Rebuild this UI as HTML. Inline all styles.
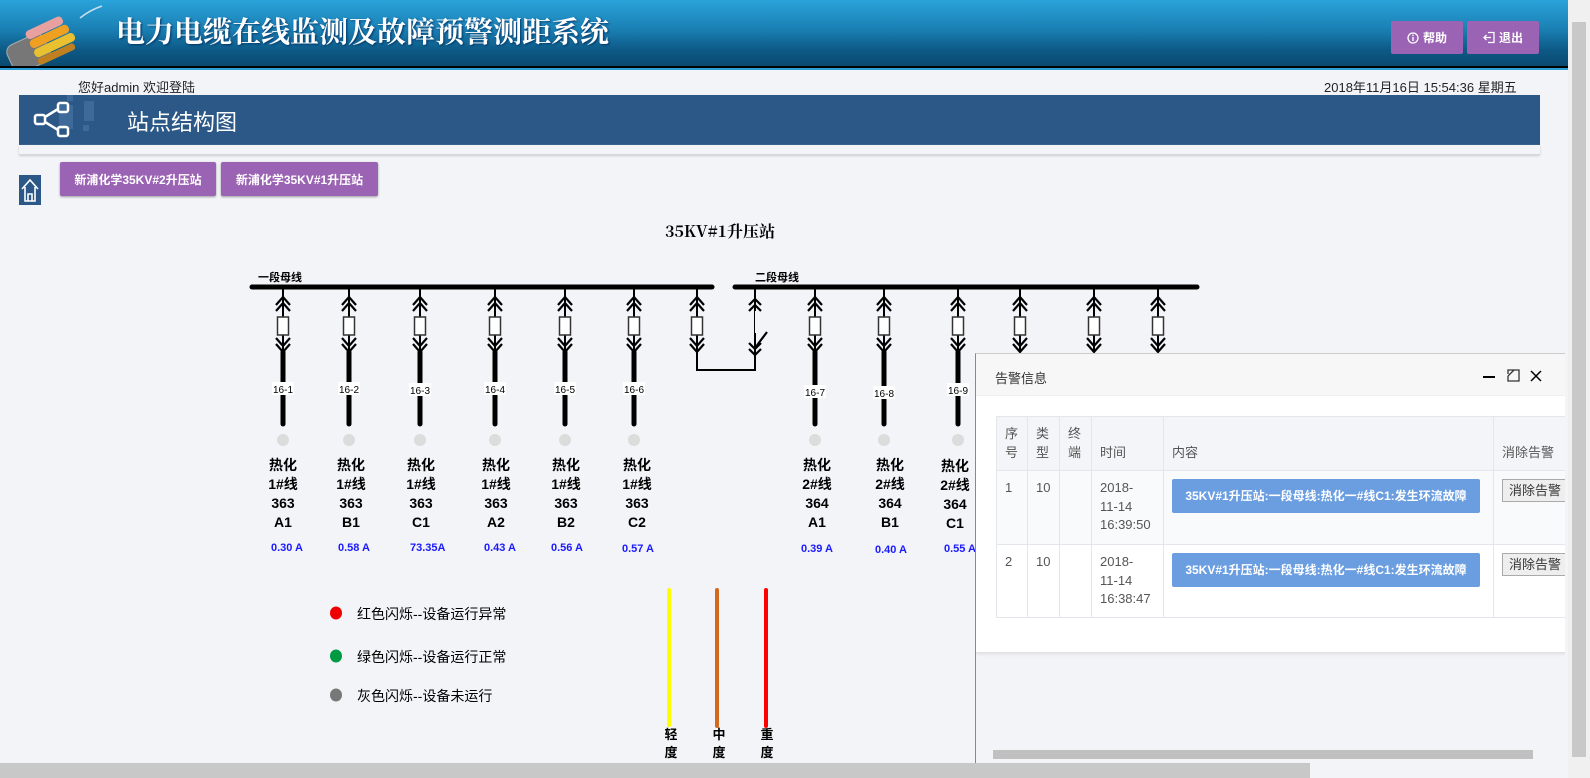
<!DOCTYPE html>
<html><head><meta charset="utf-8">
<style>
*{margin:0;padding:0;box-sizing:border-box}
body{width:1590px;height:778px;overflow:hidden;background:#f3f4f8;font-family:"Liberation Sans","Noto Sans CJK SC",sans-serif;position:relative}
.hdr{position:absolute;left:0;top:0;width:1568px;height:66px;background:linear-gradient(#29a3d9 0%,#1a7fb3 45%,#0d5a87 75%,#0a4a70 100%)}
.hdr:after{content:"";position:absolute;left:0;top:66px;width:100%;height:2px;background:#000}
.hline{position:absolute;left:0;top:68px;width:1568px;height:2px;background:#2a9fd6}
.title{position:absolute;left:116px;top:10px;font-family:"Noto Serif CJK SC",serif;font-weight:bold;font-size:29px;color:#fff;letter-spacing:0px;text-shadow:1px 1px 2px #036}
.hbtn{position:absolute;top:21px;height:33px;background:#9b63b3;color:#fff;font-size:12px;font-weight:bold;border-radius:2px;display:flex;align-items:center;justify-content:center;gap:4px}
.sub{position:absolute;top:77px;font-size:13px;color:#222}
.bar{position:absolute;left:19px;top:95px;width:1521px;height:50px;background:#2b5887}
.barb{position:absolute;left:19px;top:145px;width:1521px;height:10px;background:#f3f4f8;border-bottom:1px solid #d8d8dc;box-shadow:0 1px 2px #ccc}
.bar span{position:absolute;left:108px;top:10px;color:#fff;font-size:22px}
.pbtn{position:absolute;top:162px;height:34px;background:#9b63b3;color:#fff;font-size:12px;font-weight:bold;display:flex;align-items:center;justify-content:center;border-radius:2px;box-shadow:0 1px 2px #999}
.vsb{position:absolute;left:1568px;top:0;width:22px;height:778px;background:#f0f0f0}
.vsb i{position:absolute;left:4px;top:22px;width:14px;height:735px;background:#c8c8c8}
.dlg{position:absolute;left:975px;top:353px;width:590px;height:410px;background:#f3f4f8;border-left:1px solid #888;border-top:1px solid #ccc;overflow:hidden}
.dh{height:42px;background:#f7f7f7;border-bottom:1px solid #eee;font-size:13px;color:#333;padding:14px 0 0 19px;position:relative}
.db{background:#fff;height:256px;padding-top:20px;padding-left:20px;box-shadow:0 2px 3px #ddd;overflow:hidden;width:590px}
table{border-collapse:collapse;font-size:13px;color:#555;table-layout:fixed;width:620px}
td,th{border:1px solid #e3e6ea;font-weight:normal;text-align:left;vertical-align:top;padding:8px 8px;line-height:18.5px;overflow:hidden}
th{background:#f3f5f8;vertical-align:bottom}
tr.r td{background:#f9fafc}
.ab{background:#6a9ee0;color:#fff;font-weight:bold;font-size:12px;height:34px;width:308px;display:flex;align-items:center;justify-content:center;border-radius:2px;margin-top:0;white-space:nowrap}
.xb{border:1px solid #aaa;background:#eee;font-size:13px;color:#333;padding:3px 6px;width:70px;white-space:nowrap;overflow:hidden;height:23px;line-height:16px}
</style></head><body>
<div class="hdr">
<svg width="110" height="66" style="position:absolute;left:0;top:0">
<g transform="rotate(-25 50 40)">
<rect x="5" y="28" width="40" height="30" rx="8" fill="#777" stroke="#aaa"/>
<rect x="30" y="22" width="40" height="9" rx="4" fill="#e8a0a0"/>
<rect x="30" y="32" width="42" height="9" rx="4" fill="#f0a020"/>
<rect x="30" y="42" width="44" height="9" rx="4" fill="#e8c030"/>
<rect x="30" y="52" width="40" height="7" rx="3" fill="#c08020"/>
</g>
<path d="M80 18 q10 -8 22 -12" stroke="#cde" stroke-width="1.5" fill="none"/>
</svg>
<div class="title">电力电缆在线监测及故障预警测距系统</div>
<div class="hbtn" style="left:1391px;width:72px"><svg width="12" height="12"><circle cx="6" cy="6" r="5" fill="none" stroke="#fff" stroke-width="1.3"/><rect x="5.3" y="5" width="1.4" height="4" fill="#fff"/><rect x="5.3" y="2.7" width="1.4" height="1.4" fill="#fff"/></svg>帮助</div>
<div class="hbtn" style="left:1467px;width:72px"><svg width="12" height="13"><path d="M5 1.5h6v10H5M1 6.5h7M3.5 4 1 6.5 3.5 9" fill="none" stroke="#fff" stroke-width="1.3"/></svg>退出</div>
</div>
<div class="hline"></div>
<div class="sub" style="left:78px">您好admin 欢迎登陆</div>
<div class="sub" style="left:1324px">2018年11月16日 15:54:36 星期五</div>
<div class="bar">
<svg width="90" height="50" style="position:absolute;left:0;top:0">
<rect x="40" y="10" width="14" height="24" fill="#3d6a98"/><rect x="65" y="6" width="10" height="20" fill="#3d6a98"/><rect x="64" y="30" width="6" height="6" fill="#3d6a98"/><rect x="48" y="0" width="6" height="6" fill="#3d6a98"/>
<g fill="none" stroke="#fff" stroke-width="2.5"><rect x="39" y="8" width="10" height="9" rx="2"/><rect x="39" y="32" width="10" height="9" rx="2"/><rect x="16" y="20" width="10" height="9" rx="2"/><path d="M26 22 39 14M26 27 39 35"/></g>
</svg>
<span>站点结构图</span></div>
<div class="barb"></div>
<svg width="22" height="30" style="position:absolute;left:19px;top:175px"><rect width="22" height="30" fill="#2b5887"/><path d="M3 14 11 5 19 14M6 12v14h10V12M9 26v-7h4v7" fill="none" stroke="#fff" stroke-width="1.6"/></svg>
<div class="pbtn" style="left:60px;width:156px">新浦化学35KV#2升压站</div>
<div class="pbtn" style="left:221px;width:157px">新浦化学35KV#1升压站</div>

<svg width="1568" height="778" style="position:absolute;left:0;top:0" font-family="Liberation Sans,Noto Sans CJK SC,sans-serif">
<defs>
<g id="fd">
<line x1="0" y1="287" x2="0" y2="352" stroke="#000" stroke-width="2"/>
<g fill="none" stroke="#000" stroke-width="2.2">
<polyline points="-7,305 0,297 7,305"/><polyline points="-7,311 0,303 7,311"/>
<polyline points="-7,338 0,346 7,338"/><polyline points="-7,344 0,352 7,344"/></g>
<rect x="-5.5" y="317" width="11" height="18" fill="#fff" stroke="#333" stroke-width="1.5"/>
</g>
<g id="ln"><line x1="0" y1="352" x2="0" y2="424" stroke="#000" stroke-width="5" stroke-linecap="round"/><circle cx="0" cy="440" r="6" fill="#dcdcdc"/></g>
</defs>
<text x="720" y="237" font-size="16" font-weight="bold" text-anchor="middle" font-family="Noto Serif CJK SC,serif">35KV#1升压站</text>
<text x="258" y="281" font-size="11" font-weight="bold">一段母线</text>
<text x="755" y="281" font-size="11" font-weight="bold">二段母线</text>
<line x1="252" y1="287" x2="712" y2="287" stroke="#000" stroke-width="5" stroke-linecap="round"/>
<line x1="735" y1="287" x2="1197" y2="287" stroke="#000" stroke-width="5" stroke-linecap="round"/>
<g>
<use href="#fd" x="283"/><use href="#fd" x="349"/><use href="#fd" x="420"/><use href="#fd" x="495"/><use href="#fd" x="565"/><use href="#fd" x="634"/><use href="#fd" x="697"/>
<use href="#fd" x="815"/><use href="#fd" x="884"/><use href="#fd" x="958"/><use href="#fd" x="1020"/><use href="#fd" x="1094"/><use href="#fd" x="1158"/>
<use href="#ln" x="283"/><use href="#ln" x="349"/><use href="#ln" x="420"/><use href="#ln" x="495"/><use href="#ln" x="565"/><use href="#ln" x="634"/>
<use href="#ln" x="815"/><use href="#ln" x="884"/><use href="#ln" x="958"/>
</g>
<polyline points="697,352 697,370 755,370 755,287" fill="none" stroke="#000" stroke-width="2"/>
<g fill="none" stroke="#000" stroke-width="2.2"><polyline points="749,305 755,299 761,305"/><polyline points="749,311 755,305 761,311"/><line x1="755" y1="348" x2="767" y2="332"/><polyline points="749,343 755,349 761,343"/><polyline points="749,349 755,355 761,349"/></g>
<rect x="755" y="311" width="4" height="22" fill="#f3f4f8"/>
<g font-size="10" text-anchor="middle">
<rect x="272" y="382" width="22" height="13" fill="#fff"/><text x="283" y="393">16-1</text>
<rect x="338" y="382" width="22" height="13" fill="#fff"/><text x="349" y="393">16-2</text>
<rect x="409" y="383" width="22" height="13" fill="#fff"/><text x="420" y="394">16-3</text>
<rect x="484" y="382" width="22" height="13" fill="#fff"/><text x="495" y="393">16-4</text>
<rect x="554" y="382" width="22" height="13" fill="#fff"/><text x="565" y="393">16-5</text>
<rect x="623" y="382" width="22" height="13" fill="#fff"/><text x="634" y="393">16-6</text>
<rect x="804" y="385" width="22" height="13" fill="#fff"/><text x="815" y="396">16-7</text>
<rect x="873" y="386" width="22" height="13" fill="#fff"/><text x="884" y="397">16-8</text>
<rect x="947" y="383" width="22" height="13" fill="#fff"/><text x="958" y="394">16-9</text>
</g>
<g font-size="14" font-weight="bold" text-anchor="middle">
<text x="283" y="470">热化</text><text x="283" y="489">1#线</text><text x="283" y="508">363</text><text x="283" y="527">A1</text>
<text x="351" y="470">热化</text><text x="351" y="489">1#线</text><text x="351" y="508">363</text><text x="351" y="527">B1</text>
<text x="421" y="470">热化</text><text x="421" y="489">1#线</text><text x="421" y="508">363</text><text x="421" y="527">C1</text>
<text x="496" y="470">热化</text><text x="496" y="489">1#线</text><text x="496" y="508">363</text><text x="496" y="527">A2</text>
<text x="566" y="470">热化</text><text x="566" y="489">1#线</text><text x="566" y="508">363</text><text x="566" y="527">B2</text>
<text x="637" y="470">热化</text><text x="637" y="489">1#线</text><text x="637" y="508">363</text><text x="637" y="527">C2</text>
<text x="817" y="470">热化</text><text x="817" y="489">2#线</text><text x="817" y="508">364</text><text x="817" y="527">A1</text>
<text x="890" y="470">热化</text><text x="890" y="489">2#线</text><text x="890" y="508">364</text><text x="890" y="527">B1</text>
<text x="955" y="471">热化</text><text x="955" y="490">2#线</text><text x="955" y="509">364</text><text x="955" y="528">C1</text>
</g>
<g font-size="11" font-weight="bold" fill="#1a1aff">
<text x="271" y="551">0.30 A</text><text x="338" y="551">0.58 A</text><text x="410" y="551">73.35A</text><text x="484" y="551">0.43 A</text><text x="551" y="551">0.56 A</text><text x="622" y="552">0.57 A</text>
<text x="801" y="552">0.39 A</text><text x="875" y="553">0.40 A</text><text x="944" y="552">0.55 A</text>
</g>
<ellipse cx="336" cy="613" rx="6" ry="6.5" fill="#e00"/>
<ellipse cx="336" cy="656" rx="6" ry="6.5" fill="#009944"/>
<ellipse cx="336" cy="695" rx="6" ry="6.5" fill="#777"/>
<g font-size="14"><text x="357" y="619">红色闪烁--设备运行异常</text><text x="357" y="662">绿色闪烁--设备运行正常</text><text x="357" y="701">灰色闪烁--设备未运行</text></g>
<g stroke-width="4" stroke-linecap="round"><line x1="669" y1="590" x2="669" y2="725" stroke="#ff0"/><line x1="717" y1="590" x2="717" y2="726" stroke="#d2691e"/><line x1="766" y1="590" x2="766" y2="726" stroke="#f00"/></g>
<g font-size="13" font-weight="bold" text-anchor="middle"><text x="671" y="739">轻</text><text x="671" y="757">度</text><text x="719" y="739">中</text><text x="719" y="757">度</text><text x="767" y="739">重</text><text x="767" y="757">度</text></g>
</svg>

<div class="dlg">
<div class="dh">告警信息
<svg width="70" height="20" style="position:absolute;left:505px;top:13px"><path d="M2 10h12" stroke="#000" stroke-width="2"/><path d="M29 3h9v11h-11v-5M27 7V3h4M33 3l-6 6" fill="none" stroke="#333" stroke-width="1.3"/><path d="M50 4l10 10M60 4 50 14" stroke="#000" stroke-width="1.5"/></svg>
</div>
<div class="db">
<table>
<colgroup><col style="width:31px"><col style="width:32px"><col style="width:32px"><col style="width:72px"><col style="width:330px"><col style="width:123px"></colgroup>
<tr><th>序号</th><th>类型</th><th>终端</th><th>时间</th><th>内容</th><th style="white-space:nowrap">消除告警</th></tr>
<tr class="r" style="height:74px"><td>1</td><td>10</td><td></td><td>2018-<br>11-14<br>16:39:50</td><td><div class="ab">35KV#1升压站:一段母线:热化一#线C1:发生环流故障</div></td><td><div class="xb">消除告警</div></td></tr>
<tr style="height:73px"><td>2</td><td>10</td><td></td><td>2018-<br>11-14<br>16:38:47</td><td><div class="ab">35KV#1升压站:一段母线:热化一#线C1:发生环流故障</div></td><td><div class="xb">消除告警</div></td></tr>
</table>
</div>
<div style="position:absolute;left:17px;top:396px;width:540px;height:9px;background:#c0c0c0"></div>
</div>
<div style="position:absolute;left:0;top:763px;width:1310px;height:15px;background:#c8c8c8"></div>
<div class="vsb"><i></i></div>
</body></html>
